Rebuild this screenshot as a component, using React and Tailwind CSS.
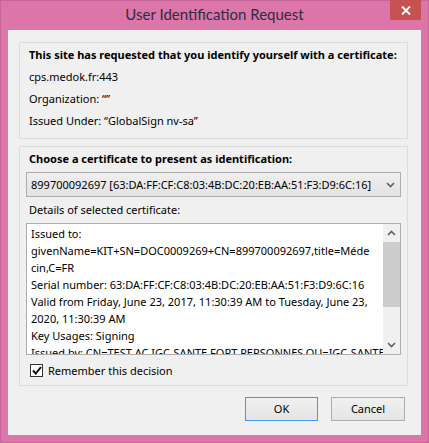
import React from "react";

const lines = [
  "Issued to:",
  "givenName=KIT+SN=DOC0009269+CN=899700092697,title=Méde",
  "cin,C=FR",
  "Serial number: 63:DA:FF:CF:C8:03:4B:DC:20:EB:AA:51:F3:D9:6C:16",
  "Valid from Friday, June 23, 2017, 11:30:39 AM to Tuesday, June 23,",
  "2020, 11:30:39 AM",
  "Key Usages: Signing",
  "Issued by: CN=TEST AC IGC-SANTE FORT PERSONNES,OU=IGC-SANTE TEST",
];

const Chevron = ({ up }) => (
  <svg width="9" height="6" viewBox="0 0 9 6" className={up ? "rotate-180" : ""}>
    <path d="M1 1 L4.5 4.5 L8 1" fill="none" stroke="#606060" strokeWidth="1.6" />
  </svg>
);

const App = () => {
  return (
    <div
      className="w-[429px] h-[443px] flex flex-col bg-[#dd76a8] border border-[#c8649a] text-[11px] text-black"
      style={{ fontFamily: '"Noto Sans", "Segoe UI", sans-serif' }}
    >
      {/* title bar */}
      <div className="h-[29px] flex relative shrink-0">
        <div
          className="flex-1 flex items-center justify-center text-[15px] text-[#2e2a45] pb-[2px]"
          style={{ fontFamily: 'Lato, "Noto Sans", sans-serif' }}
        >
          User Identification Request
        </div>
        <div className="absolute right-[7px] top-[-1px] w-[31px] h-[20px] bg-[#c75050] flex items-center justify-center">
          <svg width="10" height="9" viewBox="0 0 10 9">
            <path d="M1 0.5 L9 8.5 M9 0.5 L1 8.5" stroke="#fff" strokeWidth="2" />
          </svg>
        </div>
      </div>

      {/* client area */}
      <div className="mx-[7px] h-[405px] bg-[#f0f0f0] flex flex-col pl-[11px] pr-[13px] pt-[12px]">
        {/* site group */}
        <div className="border border-[#dcdcdc] h-[97px] pl-[9px] pt-[1px] leading-[22px]">
          <div className="font-bold whitespace-nowrap">This site has requested that you identify yourself with a certificate:</div>
          <div>cps.medok.fr:443</div>
          <div>Organization: “”</div>
          <div>Issued Under: “GlobalSign nv-sa”</div>
        </div>

        {/* certificate group */}
        <div className="mt-[7px] border border-[#dcdcdc] h-[240px] px-[6px] pt-[3px] flex flex-col leading-[17px]">
          <div className="font-bold pl-[3px]">Choose a certificate to present as identification:</div>
          <div className="mt-[5px] h-[25px] border border-[#acacac] bg-gradient-to-b from-[#efefef] to-[#e3e3e3] flex items-center pl-[4px] pr-[5px]">
            <span className="flex-1 whitespace-nowrap overflow-hidden">
              899700092697 [63:DA:FF:CF:C8:03:4B:DC:20:EB:AA:51:F3:D9:6C:16]
            </span>
            <Chevron />
          </div>
          <div className="mt-[4px] pl-[3px]">Details of selected certificate:</div>
          <div className="mt-[5px] h-[132px] border border-[#abadb3] bg-white flex">
            <div className="flex-1 overflow-hidden pl-[4px] pt-[1px] whitespace-nowrap">
              {lines.map((l, i) => (
                <div key={i}>{l}</div>
              ))}
            </div>
            <div className="w-[17px] bg-[#f0f0f0] flex flex-col items-center">
              <div className="h-[18px] flex items-center justify-center">
                <Chevron up />
              </div>
              <div className="w-full h-[65px] bg-[#cdcdcd]" />
              <div className="flex-1" />
              <div className="h-[18px] flex items-center justify-center">
                <Chevron />
              </div>
            </div>
          </div>
          <div className="mt-[7px] flex items-center pl-[4px] h-[17px]">
            <div className="w-[13px] h-[13px] border border-[#333] bg-white flex items-center justify-center">
              <svg width="10" height="9" viewBox="0 0 10 9">
                <path d="M1 4.5 L3.8 7.5 L9 1" fill="none" stroke="#111" strokeWidth="2" />
              </svg>
            </div>
            <span className="ml-[5px]">Remember this decision</span>
          </div>
        </div>

        {/* buttons */}
        <div className="mt-[11px] flex justify-end gap-[13px] pr-[3px]">
          <button className="w-[73px] h-[24px] border border-[#3c9cf0] bg-gradient-to-b from-[#f0f0f0] to-[#e5e5e5]">
            OK
          </button>
          <button className="w-[74px] h-[24px] border border-[#adadad] bg-gradient-to-b from-[#f0f0f0] to-[#e5e5e5]">
            Cancel
          </button>
        </div>
      </div>
    </div>
  );
};

export default App;
